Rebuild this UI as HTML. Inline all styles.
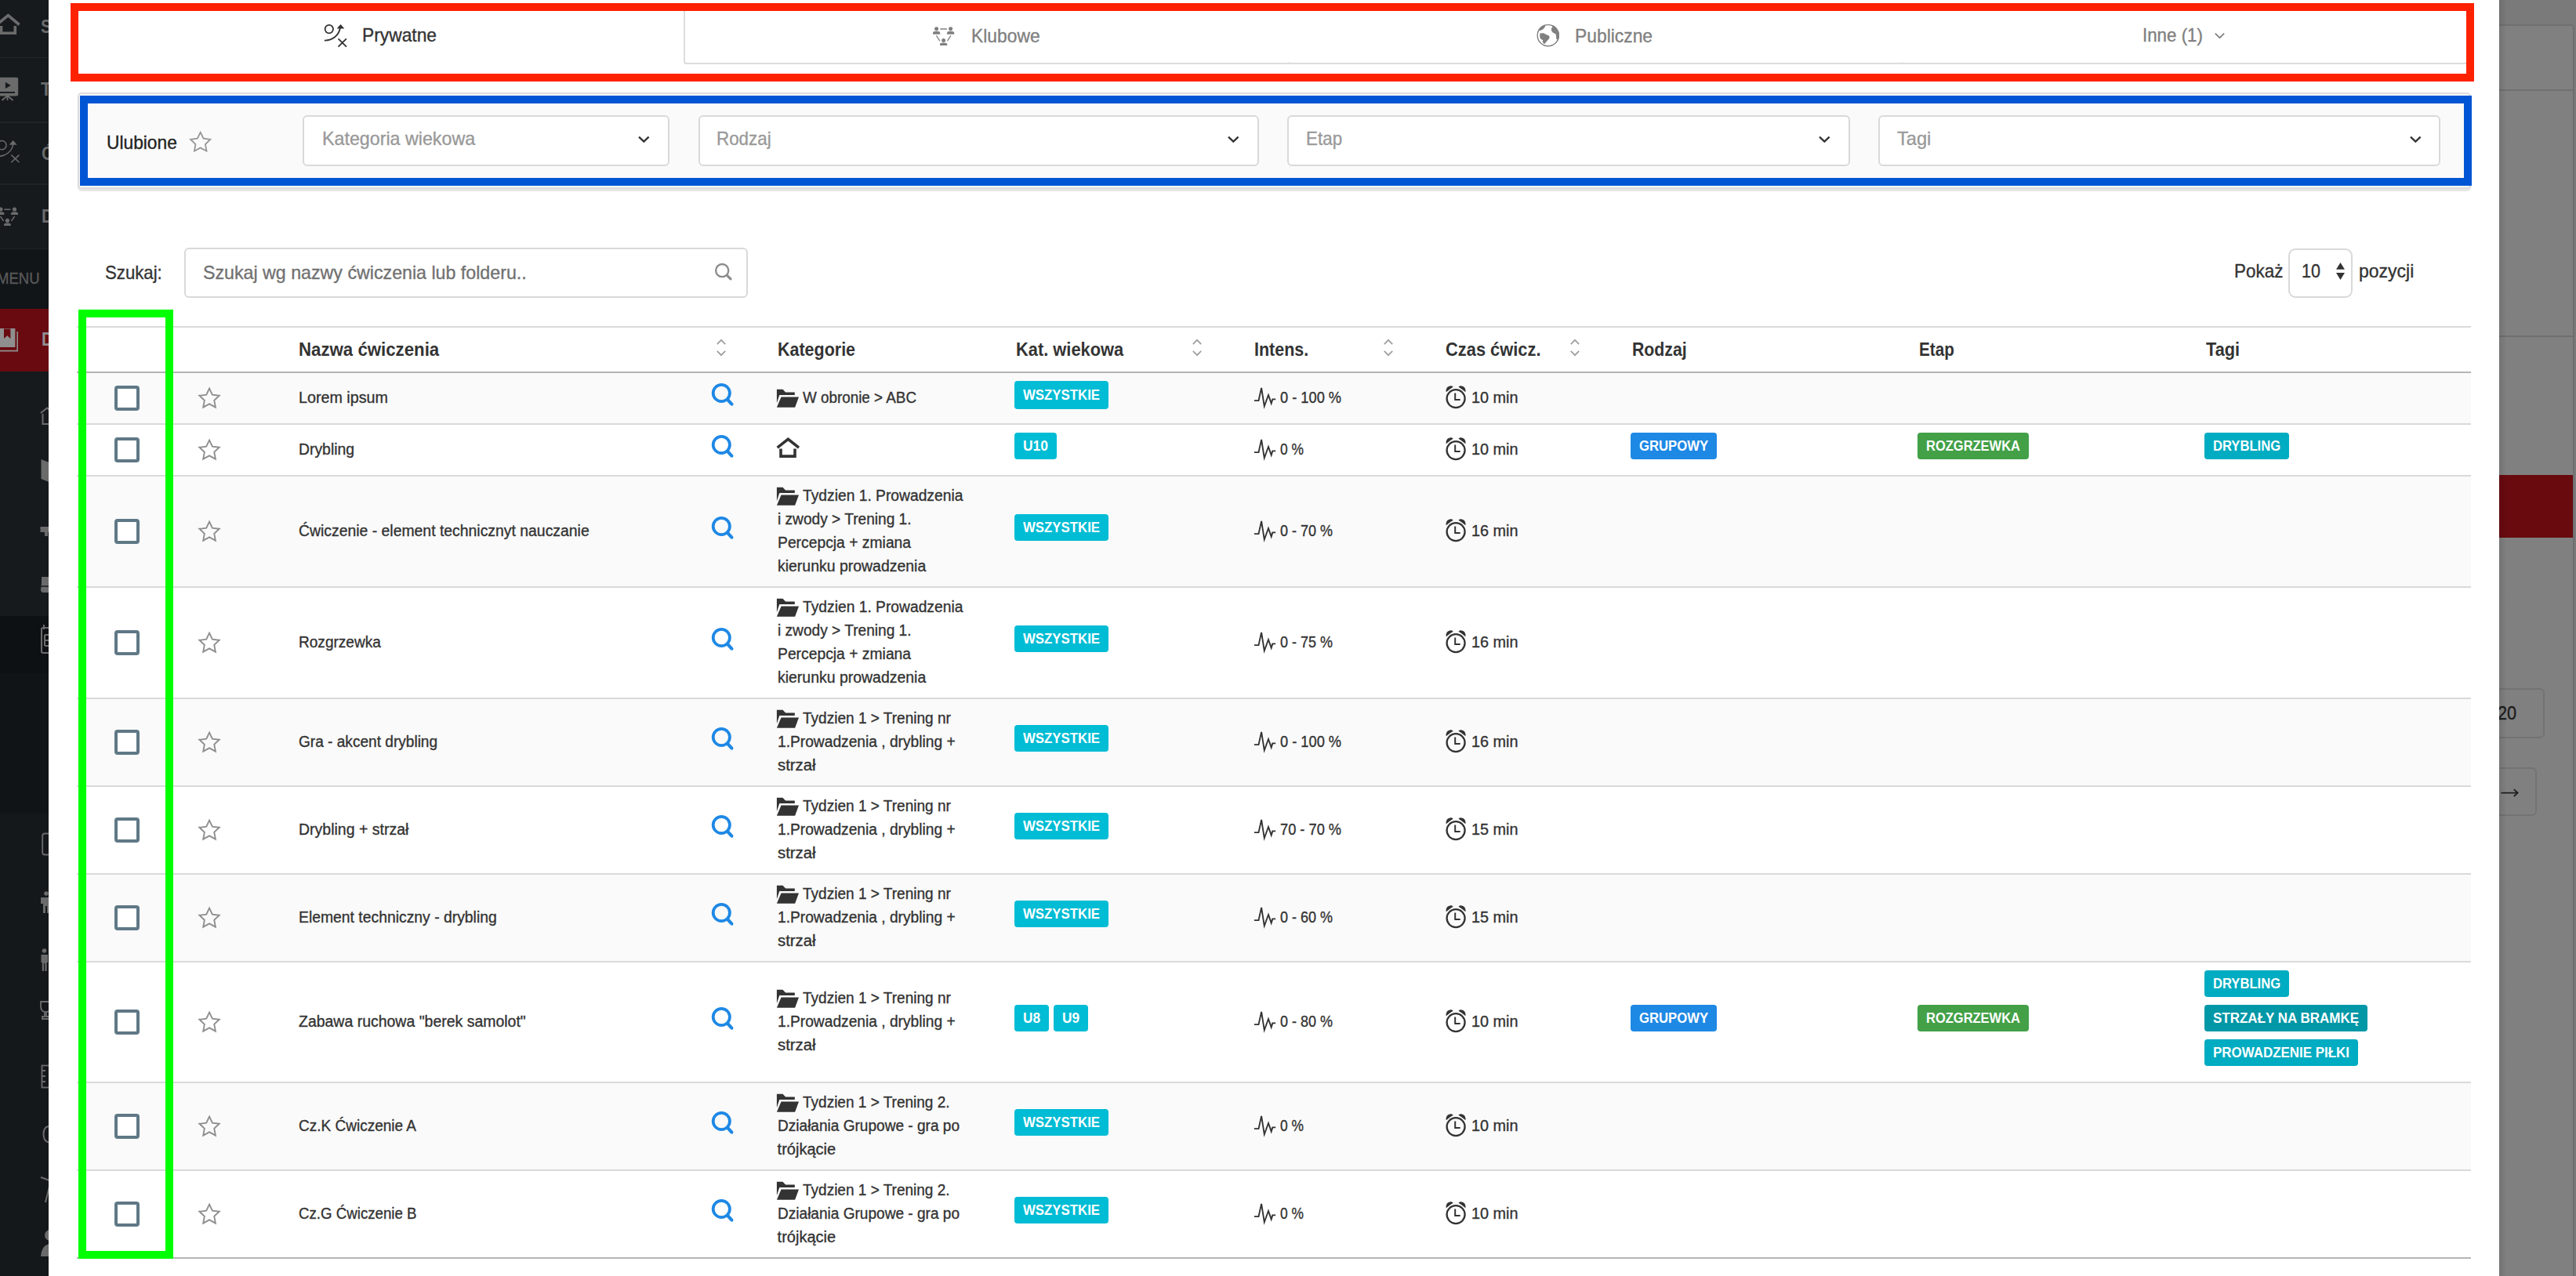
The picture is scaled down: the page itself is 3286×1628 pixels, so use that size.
<!DOCTYPE html>
<html><head><meta charset="utf-8"><title>Ćwiczenia</title>
<style>
html,body{margin:0;padding:0;}
body{width:3286px;height:1628px;position:relative;overflow:hidden;background:#fff;font-family:"Liberation Sans",sans-serif;}
.a{position:absolute;}
.t{position:absolute;white-space:nowrap;-webkit-text-stroke:0.35px currentColor;}
svg.a{overflow:visible;}
</style></head><body>
<div class="a" style="left:3188.00px;top:0.00px;width:98.00px;height:1628.00px;background:#7a7a7a;"></div>
<div class="a" style="left:3150.00px;top:31.00px;width:134.00px;height:1669.00px;box-sizing:border-box;background:#808080;border:2px solid #6f6f6f;border-radius:5px;"></div>
<div class="a" style="left:3188.00px;top:113.50px;width:95.00px;height:2.00px;background:#6f6f6f;"></div>
<div class="a" style="left:3188.00px;top:427.50px;width:95.00px;height:2.00px;background:#6f6f6f;"></div>
<div class="a" style="left:3188.00px;top:606.00px;width:94.00px;height:80.00px;background:#690a0f;"></div>
<div class="a" style="left:3150.00px;top:878.00px;width:96.00px;height:64.00px;box-sizing:border-box;border:2px solid #737373;border-radius:6px;"></div>
<div class="t" style="left:3186.20px;top:897.68px;font-size:24px;line-height:24px;color:#1b1b1b;transform:scaleX(0.9047);transform-origin:0 0;">20</div>
<div class="a" style="left:3150.00px;top:978.50px;width:86.00px;height:62.50px;box-sizing:border-box;border:2px solid #737373;border-radius:6px;"></div>
<svg class="a" style="left:3185.00px;top:1000.00px;" width="34.00" height="24.00" viewBox="3185.00 1000.00 34.00 24.00"><path d="M3190.5 1011.6 H3211.5" stroke="#1b1b1b" stroke-width="1.7"/><path d="M3206.8 1007.2 L3211.6 1011.6 L3206.8 1016" fill="none" stroke="#1b1b1b" stroke-width="1.7"/></svg>
<div class="a" style="left:3188.00px;top:0.00px;width:10.00px;height:1628.00px;background:linear-gradient(to right, rgba(0,0,0,0.10), rgba(0,0,0,0));"></div>
<div class="a" style="left:62.00px;top:0.00px;width:3126.00px;height:1628.00px;background:#ffffff;"></div>
<div class="a" style="left:0;top:0;width:62px;height:1628px;overflow:hidden;background:#161a1d;">
<div class="a" style="left:0.00px;top:317.00px;width:62.00px;height:77.00px;background:#111518;"></div>
<div class="a" style="left:0.00px;top:786.00px;width:62.00px;height:73.00px;background:#0d1113;"></div>
<div class="a" style="left:0.00px;top:859.00px;width:62.00px;height:179.00px;background:#101416;"></div>
<div class="a" style="left:0.00px;top:1038.00px;width:62.00px;height:590.00px;background:#14181b;"></div>
<div class="a" style="left:0.00px;top:72.50px;width:62.00px;height:1.50px;background:#1f2427;"></div>
<div class="a" style="left:0.00px;top:155.00px;width:62.00px;height:1.50px;background:#1f2427;"></div>
<div class="a" style="left:0.00px;top:234.00px;width:62.00px;height:1.50px;background:#1f2427;"></div>
<div class="a" style="left:0.00px;top:316.50px;width:62.00px;height:1.50px;background:#1f2427;"></div>
<div class="a" style="left:0.00px;top:394.00px;width:62.00px;height:80.00px;background:#690a10;"></div>
<svg class="a" style="left:0.00px;top:14.00px;" width="30.00" height="34.00" viewBox="0.00 14.00 30.00 34.00"><path d="M-4 31.5 L10.4 19.6 L24.6 31.5" fill="none" stroke="#6b6b6b" stroke-width="3.6"/><path d="M1.5 33 V42.2 H19.3 V33" fill="none" stroke="#6b6b6b" stroke-width="3.6"/></svg>
<div class="t" style="left:52.30px;top:22.28px;font-size:24px;line-height:24px;color:#6b6b6b;font-weight:bold;-webkit-text-stroke:0;transform:scaleX(0.8682);transform-origin:0 0;">S</div>
<svg class="a" style="left:0.00px;top:96.00px;" width="30.00" height="34.00" viewBox="0.00 96.00 30.00 34.00"><rect x="-6" y="98.8" width="29.2" height="23.8" rx="2" fill="#6b6b6b"/><path d="M6.9 104.8 L13.8 108.9 L6.9 112.9 Z" fill="#161a1d"/><rect x="-2" y="117" width="21" height="1.9" fill="#161a1d"/><path d="M9.5 122 V128 M9.5 122 L2.5 128 M9.5 122 L16.5 128" stroke="#6b6b6b" stroke-width="1.8"/></svg>
<div class="t" style="left:52.20px;top:101.58px;font-size:24px;line-height:24px;color:#6b6b6b;font-weight:bold;-webkit-text-stroke:0;transform:scaleX(0.9418);transform-origin:0 0;">T</div>
<svg class="a" style="left:0.00px;top:170.00px;" width="30.00" height="42.00" viewBox="0.00 170.00 30.00 42.00"><g fill="none" stroke="#6b6b6b" stroke-width="1.5"><circle cx="2.4" cy="185.2" r="5.6"/><path d="M-3 199.6 C7 199.4 15.6 193.5 16.8 183.5"/><path d="M14.3 197.6 L24.5 207.3 M24.5 197.6 L14.3 207.3"/></g><path d="M16.7 179 L21.6 184.7 L11.7 184.7 Z" fill="#6b6b6b"/></svg>
<div class="t" style="left:52.70px;top:183.88px;font-size:24px;line-height:24px;color:#6b6b6b;font-weight:bold;-webkit-text-stroke:0;transform:scaleX(0.8747);transform-origin:0 0;">Ć</div>
<svg class="a" style="left:-6.00px;top:260.00px;" width="36.00" height="32.00" viewBox="-6.00 260.00 36.00 32.00"><g fill="#6b6b6b"><circle cx="1" cy="267" r="2.6"/><circle cx="18.5" cy="267" r="2.6"/><circle cx="9.4" cy="281.4" r="2.6"/><path d="M-4 274 V272.6 Q-4 270.2 1 270.2 Q5.4 270.2 5.4 272.6 V274 Z"/><path d="M14 274 V272.6 Q14 270.2 18.5 270.2 Q23 270.2 23 272.6 V274 Z"/><path d="M5 288 V286.6 Q5 284.6 9.4 284.6 Q13.8 284.6 13.8 286.6 V288 Z"/></g><path d="M5.4 267.3 H13.4 M0.5 276 L4.5 282 M18.6 276 L14.5 282" stroke="#6b6b6b" stroke-width="1.4"/></svg>
<div class="t" style="left:53.00px;top:263.58px;font-size:24px;line-height:24px;color:#6b6b6b;font-weight:bold;-webkit-text-stroke:0;transform:scaleX(0.8747);transform-origin:0 0;">D</div>
<div class="t" style="left:-4.40px;top:345.07px;font-size:20px;line-height:20px;color:#5a5a5a;transform:scaleX(0.9254);transform-origin:0 0;">MENU</div>
<svg class="a" style="left:-4.00px;top:414.00px;" width="30.00" height="38.00" viewBox="-4.00 414.00 30.00 38.00"><path d="M-2 419 H19.4 V443 H-2 Z" fill="#8f8f8f"/><path d="M5 419.5 V432 L9.2 428.3 L13.4 432 V419.5 Z" fill="#690a10"/><path d="M22.2 423 V447.6 H-1" fill="none" stroke="#8f8f8f" stroke-width="1.6"/><path d="M1.5 444.8 H19" stroke="#690a10" stroke-width="1"/></svg>
<div class="t" style="left:52.70px;top:421.38px;font-size:24px;line-height:24px;color:#8f8f8f;font-weight:bold;-webkit-text-stroke:0;transform:scaleX(0.8747);transform-origin:0 0;">D</div>
<svg class="a" style="left:48.00px;top:515.00px;" width="16.00" height="30.00" viewBox="48.00 515.00 16.00 30.00"><path d="M52 527 L60 520.5 L68 527" fill="none" stroke="#6b6b6b" stroke-width="2"/><path d="M54.5 528 V541 H66" fill="none" stroke="#6b6b6b" stroke-width="2"/></svg>
<svg class="a" style="left:48.00px;top:580.00px;" width="16.00" height="40.00" viewBox="48.00 580.00 16.00 40.00"><path d="M52.5 586 L62.5 590 V615 L52.5 611 Z" fill="#6b6b6b"/></svg>
<svg class="a" style="left:48.00px;top:665.00px;" width="16.00" height="24.00" viewBox="48.00 665.00 16.00 24.00"><rect x="51.5" y="672" width="11" height="7" fill="#6b6b6b"/><rect x="57" y="678" width="4" height="6" fill="#6b6b6b"/></svg>
<svg class="a" style="left:48.00px;top:732.00px;" width="16.00" height="28.00" viewBox="48.00 732.00 16.00 28.00"><path d="M53 736 H63 V756 H55 Q52 756 52 752 L53 744 Z" fill="#6b6b6b"/><path d="M52 748 H63" stroke="#161a1d" stroke-width="1.5"/></svg>
<svg class="a" style="left:48.00px;top:794.00px;" width="16.00" height="44.00" viewBox="48.00 794.00 16.00 44.00"><rect x="53" y="801" width="12" height="32" rx="2" fill="none" stroke="#6b6b6b" stroke-width="2"/><path d="M56 797 V803" stroke="#6b6b6b" stroke-width="2"/><path d="M57 810 H63 M57 817 H63 M57 824 H63 M57 810 V824" stroke="#6b6b6b" stroke-width="2"/></svg>
<svg class="a" style="left:48.00px;top:1058.00px;" width="16.00" height="38.00" viewBox="48.00 1058.00 16.00 38.00"><rect x="54.2" y="1063.5" width="12" height="27" rx="3" fill="none" stroke="#6b6b6b" stroke-width="1.8"/></svg>
<svg class="a" style="left:48.00px;top:1132.00px;" width="16.00" height="36.00" viewBox="48.00 1132.00 16.00 36.00"><circle cx="59" cy="1140" r="2.8" fill="#6b6b6b"/><path d="M52 1145 H66 V1153 H63 V1165 H60 V1156 H58 V1165 H55 V1153 H52 Z" fill="#6b6b6b"/></svg>
<svg class="a" style="left:48.00px;top:1205.00px;" width="16.00" height="38.00" viewBox="48.00 1205.00 16.00 38.00"><circle cx="56.5" cy="1213" r="2.8" fill="#6b6b6b"/><path d="M52.5 1218 H61 V1228 H59.6 V1239 H57.3 V1229 H56 V1239 H53.8 V1228 H52.5 Z" fill="#6b6b6b"/></svg>
<svg class="a" style="left:48.00px;top:1272.00px;" width="16.00" height="34.00" viewBox="48.00 1272.00 16.00 34.00"><path d="M52 1278 H66 V1284 Q66 1290 59 1291 V1297 H63 V1300 H54 V1297 H57 V1291 Q52 1290 52 1284 Z" fill="none" stroke="#6b6b6b" stroke-width="1.8"/></svg>
<svg class="a" style="left:48.00px;top:1354.00px;" width="16.00" height="40.00" viewBox="48.00 1354.00 16.00 40.00"><rect x="53.5" y="1359.5" width="10" height="28" fill="none" stroke="#6b6b6b" stroke-width="1.8"/><path d="M54 1366 H58 M54 1373 H58 M54 1380 H58" stroke="#6b6b6b" stroke-width="1.8"/></svg>
<svg class="a" style="left:48.00px;top:1430.00px;" width="16.00" height="34.00" viewBox="48.00 1430.00 16.00 34.00"><path d="M62 1437 Q55.5 1438 55.5 1447 Q55.5 1456 62 1457.5" fill="none" stroke="#6b6b6b" stroke-width="2"/></svg>
<svg class="a" style="left:48.00px;top:1496.00px;" width="16.00" height="42.00" viewBox="48.00 1496.00 16.00 42.00"><path d="M52 1502 L63 1506 M63 1514 L58 1534" stroke="#6b6b6b" stroke-width="2"/></svg>
<svg class="a" style="left:48.00px;top:1562.00px;" width="16.00" height="44.00" viewBox="48.00 1562.00 16.00 44.00"><circle cx="64" cy="1576" r="7" fill="#6b6b6b"/><path d="M52 1603 Q53 1588 64 1587 V1603 Z" fill="#6b6b6b"/></svg>
</div>
<div class="a" style="left:873.00px;top:80.00px;width:2273.00px;height:2.00px;background:#dddddd;"></div>
<div class="a" style="left:872.00px;top:14.00px;width:774.00px;height:68.00px;box-sizing:border-box;border-left:2px solid #dddddd;border-bottom:2px solid #dddddd;border-bottom-left-radius:4px;border-bottom-right-radius:4px;"></div>
<div class="a" style="left:1644.00px;top:14.00px;width:783.00px;height:68.00px;box-sizing:border-box;border-bottom:2px solid #dddddd;border-radius:0 0 4px 4px;"></div>
<div class="a" style="left:2425.00px;top:14.00px;width:721.00px;height:68.00px;box-sizing:border-box;border-bottom:2px solid #dddddd;border-radius:0 0 4px 0;"></div>
<svg class="a" style="left:410.00px;top:28.00px;" width="36.00" height="36.00" viewBox="410.00 28.00 36.00 36.00"><g fill="none" stroke="#333333" stroke-width="1.80" stroke-linecap="round"><circle cx="419.8" cy="37.1" r="5.2"/><path d="M414.6 51.6 C424.5 51.2 432.5 45 433.9 35.5"/><path d="M432 49.9 L441.4 59.2 M441.4 49.9 L432 59.2"/></g><path d="M434.5 31 L439.3 36.6 L429.6 36.6 Z" fill="#333333"/></svg>
<div class="t" style="left:462.00px;top:33.48px;font-size:24px;line-height:24px;color:#333333;transform:scaleX(0.9500);transform-origin:0 0;">Prywatne</div>
<svg class="a" style="left:1186.00px;top:30.00px;" width="36.00" height="32.00" viewBox="1186.00 30.00 36.00 32.00"><g fill="#808080"><circle cx="1194.6" cy="36.8" r="2.5"/><circle cx="1212.6" cy="36.8" r="2.5"/><circle cx="1203.6" cy="51.4" r="2.5"/><path d="M1190 43.8 V42.2 Q1190 39.8 1194.6 39.8 Q1199.2 39.8 1199.2 42.2 V43.8 Z"/><path d="M1208 43.8 V42.2 Q1208 39.8 1212.6 39.8 Q1217.2 39.8 1217.2 42.2 V43.8 Z"/><path d="M1199 58 V56.4 Q1199 54.6 1203.6 54.6 Q1208.2 54.6 1208.2 56.4 V58 Z"/></g><g stroke="#808080" stroke-width="1.3" stroke-linecap="round"><path d="M1199.8 37 H1207.4 M1194.8 45.8 L1198.6 51.8 M1212.6 45.8 L1208.8 51.8"/></g></svg>
<div class="t" style="left:1239.00px;top:33.53px;font-size:24px;line-height:24px;color:#808080;transform:scaleX(0.9522);transform-origin:0 0;">Klubowe</div>
<svg class="a" style="left:1958.00px;top:28.00px;" width="34.00" height="34.00" viewBox="1958.00 28.00 34.00 34.00"><clipPath id="gclip"><circle cx="1974.8" cy="45.2" r="14.2"/></clipPath><circle cx="1974.8" cy="45.2" r="13.6" fill="none" stroke="#808080" stroke-width="1.4"/><g fill="#808080" clip-path="url(#gclip)"><path d="M1958 40 L1962.4 38.8 Q1964 39.5 1966.5 38.2 Q1969.6 37 1971 34 L1971 28 L1958 28 Z"/><path d="M1964.3 42.4 L1968.9 42.2 Q1971.5 43.6 1973.2 44.4 Q1976.6 45 1976.6 47.4 Q1976.4 49.6 1975 50.6 L1970.3 56 Q1968.5 55.3 1968.2 54.8 L1967.9 51 Q1964.3 49.5 1964.3 47.6 Z"/><path d="M1980.3 28 L1980.3 34.2 Q1978.7 35.6 1978.8 38.5 Q1980 42 1984.4 43.2 Q1985.3 46 1985.2 49.6 L1987.6 51.6 L1992 52 L1992 28 Z"/></g></svg>
<div class="t" style="left:2009.00px;top:33.58px;font-size:24px;line-height:24px;color:#808080;transform:scaleX(0.9519);transform-origin:0 0;">Publiczne</div>
<div class="t" style="left:2733.00px;top:33.48px;font-size:24px;line-height:24px;color:#808080;transform:scaleX(0.9305);transform-origin:0 0;">Inne (1)</div>
<svg class="a" style="left:2820.00px;top:38.00px;" width="24.00" height="16.00" viewBox="2820.00 38.00 24.00 16.00"><path d="M2825.80 42.60 L2831.50 48.20 L2837.20 42.60" fill="none" stroke="#808080" stroke-width="1.70"/></svg>
<div class="a" style="left:98.50px;top:118.00px;width:3053.00px;height:122.50px;box-sizing:border-box;background:#fafafa;border:2px solid #dcdcdc;border-radius:5px;box-shadow:0 3px 1px rgba(0,0,0,0.10);"></div>
<div class="t" style="left:136.40px;top:169.68px;font-size:24px;line-height:24px;color:#222222;transform:scaleX(0.9478);transform-origin:0 0;">Ulubione</div>
<svg class="a" style="left:238.00px;top:164.00px;" width="36.00" height="34.00" viewBox="238.00 164.00 36.00 34.00"><polygon points="255.70,168.80 259.58,176.66 268.25,177.92 261.98,184.04 263.46,192.68 255.70,188.60 247.94,192.68 249.42,184.04 243.15,177.92 251.82,176.66" fill="none" stroke="#959595" stroke-width="1.80" stroke-linejoin="miter"/></svg>
<div class="a" style="left:386.00px;top:146.50px;width:467.50px;height:65.00px;box-sizing:border-box;background:#ffffff;border:2px solid #d9d9d9;border-radius:6px;"></div>
<div class="t" style="left:411.30px;top:165.38px;font-size:24px;line-height:24px;color:#999999;transform:scaleX(0.9687);transform-origin:0 0;">Kategoria wiekowa</div>
<svg class="a" style="left:809.70px;top:168.00px;" width="22.00" height="18.00" viewBox="809.70 168.00 22.00 18.00"><path d="M814.70 174.60 L821.00 180.60 L827.30 174.60" fill="none" stroke="#333333" stroke-width="2.30"/></svg>
<div class="a" style="left:890.50px;top:146.50px;width:715.00px;height:65.00px;box-sizing:border-box;background:#ffffff;border:2px solid #d9d9d9;border-radius:6px;"></div>
<div class="t" style="left:914.10px;top:165.38px;font-size:24px;line-height:24px;color:#999999;transform:scaleX(0.9324);transform-origin:0 0;">Rodzaj</div>
<svg class="a" style="left:1561.70px;top:168.00px;" width="22.00" height="18.00" viewBox="1561.70 168.00 22.00 18.00"><path d="M1566.70 174.60 L1573.00 180.60 L1579.30 174.60" fill="none" stroke="#333333" stroke-width="2.30"/></svg>
<div class="a" style="left:1642.00px;top:146.50px;width:717.60px;height:65.00px;box-sizing:border-box;background:#ffffff;border:2px solid #d9d9d9;border-radius:6px;"></div>
<div class="t" style="left:1665.60px;top:165.38px;font-size:24px;line-height:24px;color:#999999;transform:scaleX(0.9337);transform-origin:0 0;">Etap</div>
<svg class="a" style="left:2315.80px;top:168.00px;" width="22.00" height="18.00" viewBox="2315.80 168.00 22.00 18.00"><path d="M2320.80 174.60 L2327.10 180.60 L2333.40 174.60" fill="none" stroke="#333333" stroke-width="2.30"/></svg>
<div class="a" style="left:2396.30px;top:146.50px;width:717.20px;height:65.00px;box-sizing:border-box;background:#ffffff;border:2px solid #d9d9d9;border-radius:6px;"></div>
<div class="t" style="left:2419.90px;top:165.38px;font-size:24px;line-height:24px;color:#999999;transform:scaleX(0.9852);transform-origin:0 0;">Tagi</div>
<svg class="a" style="left:3069.70px;top:168.00px;" width="22.00" height="18.00" viewBox="3069.70 168.00 22.00 18.00"><path d="M3074.70 174.60 L3081.00 180.60 L3087.30 174.60" fill="none" stroke="#333333" stroke-width="2.30"/></svg>
<div class="t" style="left:134.30px;top:335.78px;font-size:24px;line-height:24px;color:#333333;transform:scaleX(0.9244);transform-origin:0 0;">Szukaj:</div>
<div class="a" style="left:234.50px;top:316.00px;width:719.50px;height:64.00px;box-sizing:border-box;background:#fff;border:2px solid #d9d9d9;border-radius:6px;"></div>
<div class="t" style="left:258.60px;top:335.78px;font-size:24px;line-height:24px;color:#717171;transform:scaleX(0.9668);transform-origin:0 0;">Szukaj wg nazwy ćwiczenia lub folderu..</div>
<svg class="a" style="left:905.00px;top:330.00px;" width="32.00" height="32.00" viewBox="905.00 330.00 32.00 32.00"><circle cx="921.20" cy="345.10" r="8.10" fill="none" stroke="#8c8c8c" stroke-width="2.30"/><path d="M927.39 351.29 L932.00 355.90" stroke="#8c8c8c" stroke-width="3.20" stroke-linecap="round"/></svg>
<div class="t" style="left:2850.00px;top:334.38px;font-size:24px;line-height:24px;color:#333333;transform:scaleX(0.9348);transform-origin:0 0;">Pokaż</div>
<div class="a" style="left:2918.60px;top:316.50px;width:82.80px;height:63.00px;box-sizing:border-box;background:#fff;border:2px solid #d9d9d9;border-radius:9px;"></div>
<div class="t" style="left:2936.00px;top:334.08px;font-size:24px;line-height:24px;color:#333333;transform:scaleX(0.8972);transform-origin:0 0;">10</div>
<svg class="a" style="left:2976.00px;top:332.00px;" width="18.00" height="28.00" viewBox="2976.00 332.00 18.00 28.00"><path d="M2985.5 335 L2991 343.8 L2980 343.8 Z M2980 348 L2991 348 L2985.5 357.1 Z" fill="#333"/></svg>
<div class="t" style="left:3008.70px;top:334.38px;font-size:24px;line-height:24px;color:#333333;transform:scaleX(0.9584);transform-origin:0 0;">pozycji</div>
<div class="a" style="left:98.00px;top:416.00px;width:3054.00px;height:2.00px;background:#dadada;"></div>
<div class="a" style="left:98.00px;top:474.00px;width:3054.00px;height:2.00px;background:#b5b5b5;"></div>
<div class="t" style="left:381.00px;top:433.58px;font-size:24px;line-height:24px;color:#333333;font-weight:bold;-webkit-text-stroke:0;transform:scaleX(0.9266);transform-origin:0 0;">Nazwa ćwiczenia</div>
<div class="t" style="left:992.00px;top:433.58px;font-size:24px;line-height:24px;color:#333333;font-weight:bold;-webkit-text-stroke:0;transform:scaleX(0.8948);transform-origin:0 0;">Kategorie</div>
<div class="t" style="left:1295.60px;top:433.58px;font-size:24px;line-height:24px;color:#333333;font-weight:bold;-webkit-text-stroke:0;transform:scaleX(0.9101);transform-origin:0 0;">Kat. wiekowa</div>
<div class="t" style="left:1599.60px;top:433.58px;font-size:24px;line-height:24px;color:#333333;font-weight:bold;-webkit-text-stroke:0;transform:scaleX(0.8945);transform-origin:0 0;">Intens.</div>
<div class="t" style="left:1843.70px;top:433.58px;font-size:24px;line-height:24px;color:#333333;font-weight:bold;-webkit-text-stroke:0;transform:scaleX(0.9109);transform-origin:0 0;">Czas ćwicz.</div>
<div class="t" style="left:2081.50px;top:433.58px;font-size:24px;line-height:24px;color:#333333;font-weight:bold;-webkit-text-stroke:0;transform:scaleX(0.8863);transform-origin:0 0;">Rodzaj</div>
<div class="t" style="left:2447.80px;top:433.58px;font-size:24px;line-height:24px;color:#333333;font-weight:bold;-webkit-text-stroke:0;transform:scaleX(0.8615);transform-origin:0 0;">Etap</div>
<div class="t" style="left:2813.50px;top:433.58px;font-size:24px;line-height:24px;color:#333333;font-weight:bold;-webkit-text-stroke:0;transform:scaleX(0.9074);transform-origin:0 0;">Tagi</div>
<svg class="a" style="left:911.60px;top:430.00px;" width="18.00" height="28.00" viewBox="911.60 430.00 18.00 28.00"><path d="M914.40 439.20 L919.60 433.80 L924.80 439.20" fill="none" stroke="#9e9e9e" stroke-width="1.70"/><path d="M914.40 447.80 L919.60 453.20 L924.80 447.80" fill="none" stroke="#9e9e9e" stroke-width="1.70"/></svg>
<svg class="a" style="left:1519.00px;top:430.00px;" width="18.00" height="28.00" viewBox="1519.00 430.00 18.00 28.00"><path d="M1521.80 439.20 L1527.00 433.80 L1532.20 439.20" fill="none" stroke="#9e9e9e" stroke-width="1.70"/><path d="M1521.80 447.80 L1527.00 453.20 L1532.20 447.80" fill="none" stroke="#9e9e9e" stroke-width="1.70"/></svg>
<svg class="a" style="left:1763.00px;top:430.00px;" width="18.00" height="28.00" viewBox="1763.00 430.00 18.00 28.00"><path d="M1765.80 439.20 L1771.00 433.80 L1776.20 439.20" fill="none" stroke="#9e9e9e" stroke-width="1.70"/><path d="M1765.80 447.80 L1771.00 453.20 L1776.20 447.80" fill="none" stroke="#9e9e9e" stroke-width="1.70"/></svg>
<svg class="a" style="left:2000.80px;top:430.00px;" width="18.00" height="28.00" viewBox="2000.80 430.00 18.00 28.00"><path d="M2003.60 439.20 L2008.80 433.80 L2014.00 439.20" fill="none" stroke="#9e9e9e" stroke-width="1.70"/><path d="M2003.60 447.80 L2008.80 453.20 L2014.00 447.80" fill="none" stroke="#9e9e9e" stroke-width="1.70"/></svg>
<div class="a" style="left:98.00px;top:476.00px;width:3054.00px;height:64.00px;background:#fafafa;"></div>
<div class="a" style="left:98.00px;top:540.00px;width:3054.00px;height:2.00px;background:#dadada;"></div>
<div class="a" style="left:146.00px;top:492.00px;width:32.00px;height:32.00px;box-sizing:border-box;background:#fff;border:4px solid #5f7886;border-radius:4px;"></div>
<svg class="a" style="left:250.00px;top:491.00px;" width="34.00" height="34.00" viewBox="250.00 491.00 34.00 34.00"><polygon points="267.05,495.60 270.88,503.63 279.70,504.79 273.25,510.91 274.87,519.66 267.05,515.42 259.23,519.66 260.85,510.91 254.40,504.79 263.22,503.63" fill="none" stroke="#8e8e8e" stroke-width="1.90" stroke-linejoin="miter"/></svg>
<div class="t" style="left:381.00px;top:497.07px;font-size:20px;line-height:20px;color:#333333;transform:scaleX(0.9856);transform-origin:0 0;">Lorem ipsum</div>
<svg class="a" style="left:900.00px;top:484.00px;" width="42.00" height="40.00" viewBox="900.00 484.00 42.00 40.00"><circle cx="920.30" cy="501.50" r="10.60" fill="none" stroke="#1e88e5" stroke-width="3.80"/><path d="M928.47 510.29 L933.40 515.60" stroke="#1e88e5" stroke-width="4.20" stroke-linecap="round"/></svg>
<svg class="a" style="left:988.00px;top:492.00px;" width="34.00" height="30.00" viewBox="988.00 492.00 34.00 30.00"><g fill="#333" transform="translate(990.90 496.80)"><path d="M0 0 H7.6 L11.2 3.8 H22.9 V7.1 H3.4 L0 17.5 Z"/><path d="M5.6 9.6 H28.1 L23.2 23 H0 Z"/></g></svg>
<div class="t" style="left:1024.40px;top:497.07px;font-size:20px;line-height:20px;color:#333333;transform:scaleX(0.9418);transform-origin:0 0;">W obronie &gt; ABC</div>
<div class="a" style="left:1294.00px;top:486.00px;width:120.00px;height:36.00px;box-sizing:border-box;background:#00bcd4;border-radius:4px;"></div>
<div class="t" style="left:1305.00px;top:495.36px;font-size:18px;line-height:18px;color:#ffffff;font-weight:bold;-webkit-text-stroke:0;transform:scaleX(0.9333);transform-origin:0 0;">WSZYSTKIE</div>
<svg class="a" style="left:1594.00px;top:489.00px;" width="38.00" height="34.00" viewBox="1594.00 489.00 38.00 34.00"><path d="M1599.90 511.10 L1605.50 511.10 L1609.10 494.90 L1612.80 518.30 L1618.00 504.00 L1621.70 514.60 L1623.30 509.40 L1627.20 509.40" fill="none" stroke="#333" stroke-width="1.9" stroke-linejoin="miter"/></svg>
<div class="t" style="left:1633.00px;top:497.07px;font-size:20px;line-height:20px;color:#333333;transform:scaleX(0.9123);transform-origin:0 0;">0 - 100 %</div>
<svg class="a" style="left:1840.00px;top:488.00px;" width="36.00" height="38.00" viewBox="1840.00 488.00 36.00 38.00"><circle cx="1857.10" cy="508.60" r="11.5" fill="none" stroke="#333" stroke-width="2.3"/><path d="M1856.20 501.60 V509.90 H1862.70" fill="none" stroke="#333" stroke-width="2"/><path d="M1869.40 500.20 C1870.50 495.40 1866.70 491.60 1862.50 492.20 L1860.40 493.80 Q1864.50 496.00 1869.40 500.20 Z" fill="#333"/><path d="M1844.80 500.20 C1843.70 495.40 1847.50 491.60 1851.70 492.20 L1853.80 493.80 Q1849.70 496.00 1844.80 500.20 Z" fill="#333"/></svg>
<div class="t" style="left:1877.30px;top:497.07px;font-size:20px;line-height:20px;color:#333333;transform:scaleX(0.9913);transform-origin:0 0;">10 min</div>
<div class="a" style="left:98.00px;top:606.00px;width:3054.00px;height:2.00px;background:#dadada;"></div>
<div class="a" style="left:146.00px;top:558.00px;width:32.00px;height:32.00px;box-sizing:border-box;background:#fff;border:4px solid #5f7886;border-radius:4px;"></div>
<svg class="a" style="left:250.00px;top:557.00px;" width="34.00" height="34.00" viewBox="250.00 557.00 34.00 34.00"><polygon points="267.05,561.60 270.88,569.63 279.70,570.79 273.25,576.91 274.87,585.66 267.05,581.42 259.23,585.66 260.85,576.91 254.40,570.79 263.22,569.63" fill="none" stroke="#8e8e8e" stroke-width="1.90" stroke-linejoin="miter"/></svg>
<div class="t" style="left:381.00px;top:563.07px;font-size:20px;line-height:20px;color:#333333;transform:scaleX(0.9683);transform-origin:0 0;">Drybling</div>
<svg class="a" style="left:900.00px;top:550.00px;" width="42.00" height="40.00" viewBox="900.00 550.00 42.00 40.00"><circle cx="920.30" cy="567.50" r="10.60" fill="none" stroke="#1e88e5" stroke-width="3.80"/><path d="M928.47 576.29 L933.40 581.60" stroke="#1e88e5" stroke-width="4.20" stroke-linecap="round"/></svg>
<svg class="a" style="left:986.00px;top:554.00px;" width="38.00" height="34.00" viewBox="986.00 554.00 38.00 34.00"><g fill="none" stroke="#333" stroke-width="3.50" stroke-linejoin="miter" transform="translate(990.40 557.90)"><path d="M1.2 13.2 L14.9 2.4 L28.6 13.2"/><path d="M5.6 14.6 V24.2 H23.6 V14.6" stroke-width="3.6"/></g></svg>
<div class="a" style="left:1294.00px;top:552.00px;width:54.00px;height:34.00px;box-sizing:border-box;background:#00bcd4;border-radius:4px;"></div>
<div class="t" style="left:1305.00px;top:560.36px;font-size:18px;line-height:18px;color:#ffffff;font-weight:bold;-webkit-text-stroke:0;transform:scaleX(0.9697);transform-origin:0 0;">U10</div>
<svg class="a" style="left:1594.00px;top:555.00px;" width="38.00" height="34.00" viewBox="1594.00 555.00 38.00 34.00"><path d="M1599.90 577.10 L1605.50 577.10 L1609.10 560.90 L1612.80 584.30 L1618.00 570.00 L1621.70 580.60 L1623.30 575.40 L1627.20 575.40" fill="none" stroke="#333" stroke-width="1.9" stroke-linejoin="miter"/></svg>
<div class="t" style="left:1633.00px;top:563.07px;font-size:20px;line-height:20px;color:#333333;transform:scaleX(0.8690);transform-origin:0 0;">0 %</div>
<svg class="a" style="left:1840.00px;top:554.00px;" width="36.00" height="38.00" viewBox="1840.00 554.00 36.00 38.00"><circle cx="1857.10" cy="574.60" r="11.5" fill="none" stroke="#333" stroke-width="2.3"/><path d="M1856.20 567.60 V575.90 H1862.70" fill="none" stroke="#333" stroke-width="2"/><path d="M1869.40 566.20 C1870.50 561.40 1866.70 557.60 1862.50 558.20 L1860.40 559.80 Q1864.50 562.00 1869.40 566.20 Z" fill="#333"/><path d="M1844.80 566.20 C1843.70 561.40 1847.50 557.60 1851.70 558.20 L1853.80 559.80 Q1849.70 562.00 1844.80 566.20 Z" fill="#333"/></svg>
<div class="t" style="left:1877.30px;top:563.07px;font-size:20px;line-height:20px;color:#333333;transform:scaleX(0.9913);transform-origin:0 0;">10 min</div>
<div class="a" style="left:2080.00px;top:552.00px;width:110.00px;height:34.00px;box-sizing:border-box;background:#1e88e5;border-radius:4px;"></div>
<div class="t" style="left:2091.00px;top:560.36px;font-size:18px;line-height:18px;color:#ffffff;font-weight:bold;-webkit-text-stroke:0;transform:scaleX(0.9263);transform-origin:0 0;">GRUPOWY</div>
<div class="a" style="left:2446.00px;top:552.00px;width:142.00px;height:34.00px;box-sizing:border-box;background:#43a047;border-radius:4px;"></div>
<div class="t" style="left:2457.00px;top:560.36px;font-size:18px;line-height:18px;color:#ffffff;font-weight:bold;-webkit-text-stroke:0;transform:scaleX(0.9160);transform-origin:0 0;">ROZGRZEWKA</div>
<div class="a" style="left:2812.00px;top:552.00px;width:108.00px;height:34.00px;box-sizing:border-box;background:#00acc1;border-radius:4px;"></div>
<div class="t" style="left:2823.00px;top:560.36px;font-size:18px;line-height:18px;color:#ffffff;font-weight:bold;-webkit-text-stroke:0;transform:scaleX(0.9223);transform-origin:0 0;">DRYBLING</div>
<div class="a" style="left:98.00px;top:608.00px;width:3054.00px;height:140.00px;background:#fafafa;"></div>
<div class="a" style="left:98.00px;top:748.00px;width:3054.00px;height:2.00px;background:#dadada;"></div>
<div class="a" style="left:146.00px;top:662.00px;width:32.00px;height:32.00px;box-sizing:border-box;background:#fff;border:4px solid #5f7886;border-radius:4px;"></div>
<svg class="a" style="left:250.00px;top:661.00px;" width="34.00" height="34.00" viewBox="250.00 661.00 34.00 34.00"><polygon points="267.05,665.60 270.88,673.63 279.70,674.79 273.25,680.91 274.87,689.66 267.05,685.42 259.23,689.66 260.85,680.91 254.40,674.79 263.22,673.63" fill="none" stroke="#8e8e8e" stroke-width="1.90" stroke-linejoin="miter"/></svg>
<div class="t" style="left:381.00px;top:667.07px;font-size:20px;line-height:20px;color:#333333;transform:scaleX(0.9693);transform-origin:0 0;">Ćwiczenie - element technicznyt nauczanie</div>
<svg class="a" style="left:900.00px;top:654.00px;" width="42.00" height="40.00" viewBox="900.00 654.00 42.00 40.00"><circle cx="920.30" cy="671.50" r="10.60" fill="none" stroke="#1e88e5" stroke-width="3.80"/><path d="M928.47 680.29 L933.40 685.60" stroke="#1e88e5" stroke-width="4.20" stroke-linecap="round"/></svg>
<svg class="a" style="left:988.00px;top:617.00px;" width="34.00" height="30.00" viewBox="988.00 617.00 34.00 30.00"><g fill="#333" transform="translate(990.90 621.80)"><path d="M0 0 H7.6 L11.2 3.8 H22.9 V7.1 H3.4 L0 17.5 Z"/><path d="M5.6 9.6 H28.1 L23.2 23 H0 Z"/></g></svg>
<div class="t" style="left:1024.40px;top:622.07px;font-size:20px;line-height:20px;color:#333333;transform:scaleX(0.9624);transform-origin:0 0;">Tydzien 1. Prowadzenia</div>
<div class="t" style="left:991.60px;top:651.97px;font-size:20px;line-height:20px;color:#333333;transform:scaleX(0.9559);transform-origin:0 0;">i zwody &gt; Trening 1.</div>
<div class="t" style="left:991.60px;top:681.87px;font-size:20px;line-height:20px;color:#333333;transform:scaleX(0.9653);transform-origin:0 0;">Percepcja + zmiana</div>
<div class="t" style="left:991.60px;top:711.77px;font-size:20px;line-height:20px;color:#333333;transform:scaleX(0.9725);transform-origin:0 0;">kierunku prowadzenia</div>
<div class="a" style="left:1294.00px;top:656.00px;width:120.00px;height:34.00px;box-sizing:border-box;background:#00bcd4;border-radius:4px;"></div>
<div class="t" style="left:1305.00px;top:664.36px;font-size:18px;line-height:18px;color:#ffffff;font-weight:bold;-webkit-text-stroke:0;transform:scaleX(0.9333);transform-origin:0 0;">WSZYSTKIE</div>
<svg class="a" style="left:1594.00px;top:659.00px;" width="38.00" height="34.00" viewBox="1594.00 659.00 38.00 34.00"><path d="M1599.90 681.10 L1605.50 681.10 L1609.10 664.90 L1612.80 688.30 L1618.00 674.00 L1621.70 684.60 L1623.30 679.40 L1627.20 679.40" fill="none" stroke="#333" stroke-width="1.9" stroke-linejoin="miter"/></svg>
<div class="t" style="left:1633.00px;top:667.07px;font-size:20px;line-height:20px;color:#333333;transform:scaleX(0.8997);transform-origin:0 0;">0 - 70 %</div>
<svg class="a" style="left:1840.00px;top:658.00px;" width="36.00" height="38.00" viewBox="1840.00 658.00 36.00 38.00"><circle cx="1857.10" cy="678.60" r="11.5" fill="none" stroke="#333" stroke-width="2.3"/><path d="M1856.20 671.60 V679.90 H1862.70" fill="none" stroke="#333" stroke-width="2"/><path d="M1869.40 670.20 C1870.50 665.40 1866.70 661.60 1862.50 662.20 L1860.40 663.80 Q1864.50 666.00 1869.40 670.20 Z" fill="#333"/><path d="M1844.80 670.20 C1843.70 665.40 1847.50 661.60 1851.70 662.20 L1853.80 663.80 Q1849.70 666.00 1844.80 670.20 Z" fill="#333"/></svg>
<div class="t" style="left:1877.30px;top:667.07px;font-size:20px;line-height:20px;color:#333333;transform:scaleX(0.9913);transform-origin:0 0;">16 min</div>
<div class="a" style="left:98.00px;top:890.00px;width:3054.00px;height:2.00px;background:#dadada;"></div>
<div class="a" style="left:146.00px;top:804.00px;width:32.00px;height:32.00px;box-sizing:border-box;background:#fff;border:4px solid #5f7886;border-radius:4px;"></div>
<svg class="a" style="left:250.00px;top:803.00px;" width="34.00" height="34.00" viewBox="250.00 803.00 34.00 34.00"><polygon points="267.05,807.60 270.88,815.63 279.70,816.79 273.25,822.91 274.87,831.66 267.05,827.42 259.23,831.66 260.85,822.91 254.40,816.79 263.22,815.63" fill="none" stroke="#8e8e8e" stroke-width="1.90" stroke-linejoin="miter"/></svg>
<div class="t" style="left:381.00px;top:809.07px;font-size:20px;line-height:20px;color:#333333;transform:scaleX(0.9529);transform-origin:0 0;">Rozgrzewka</div>
<svg class="a" style="left:900.00px;top:796.00px;" width="42.00" height="40.00" viewBox="900.00 796.00 42.00 40.00"><circle cx="920.30" cy="813.50" r="10.60" fill="none" stroke="#1e88e5" stroke-width="3.80"/><path d="M928.47 822.29 L933.40 827.60" stroke="#1e88e5" stroke-width="4.20" stroke-linecap="round"/></svg>
<svg class="a" style="left:988.00px;top:759.00px;" width="34.00" height="30.00" viewBox="988.00 759.00 34.00 30.00"><g fill="#333" transform="translate(990.90 763.80)"><path d="M0 0 H7.6 L11.2 3.8 H22.9 V7.1 H3.4 L0 17.5 Z"/><path d="M5.6 9.6 H28.1 L23.2 23 H0 Z"/></g></svg>
<div class="t" style="left:1024.40px;top:764.07px;font-size:20px;line-height:20px;color:#333333;transform:scaleX(0.9624);transform-origin:0 0;">Tydzien 1. Prowadzenia</div>
<div class="t" style="left:991.60px;top:793.97px;font-size:20px;line-height:20px;color:#333333;transform:scaleX(0.9559);transform-origin:0 0;">i zwody &gt; Trening 1.</div>
<div class="t" style="left:991.60px;top:823.87px;font-size:20px;line-height:20px;color:#333333;transform:scaleX(0.9653);transform-origin:0 0;">Percepcja + zmiana</div>
<div class="t" style="left:991.60px;top:853.77px;font-size:20px;line-height:20px;color:#333333;transform:scaleX(0.9725);transform-origin:0 0;">kierunku prowadzenia</div>
<div class="a" style="left:1294.00px;top:798.00px;width:120.00px;height:34.00px;box-sizing:border-box;background:#00bcd4;border-radius:4px;"></div>
<div class="t" style="left:1305.00px;top:806.36px;font-size:18px;line-height:18px;color:#ffffff;font-weight:bold;-webkit-text-stroke:0;transform:scaleX(0.9333);transform-origin:0 0;">WSZYSTKIE</div>
<svg class="a" style="left:1594.00px;top:801.00px;" width="38.00" height="34.00" viewBox="1594.00 801.00 38.00 34.00"><path d="M1599.90 823.10 L1605.50 823.10 L1609.10 806.90 L1612.80 830.30 L1618.00 816.00 L1621.70 826.60 L1623.30 821.40 L1627.20 821.40" fill="none" stroke="#333" stroke-width="1.9" stroke-linejoin="miter"/></svg>
<div class="t" style="left:1633.00px;top:809.07px;font-size:20px;line-height:20px;color:#333333;transform:scaleX(0.8997);transform-origin:0 0;">0 - 75 %</div>
<svg class="a" style="left:1840.00px;top:800.00px;" width="36.00" height="38.00" viewBox="1840.00 800.00 36.00 38.00"><circle cx="1857.10" cy="820.60" r="11.5" fill="none" stroke="#333" stroke-width="2.3"/><path d="M1856.20 813.60 V821.90 H1862.70" fill="none" stroke="#333" stroke-width="2"/><path d="M1869.40 812.20 C1870.50 807.40 1866.70 803.60 1862.50 804.20 L1860.40 805.80 Q1864.50 808.00 1869.40 812.20 Z" fill="#333"/><path d="M1844.80 812.20 C1843.70 807.40 1847.50 803.60 1851.70 804.20 L1853.80 805.80 Q1849.70 808.00 1844.80 812.20 Z" fill="#333"/></svg>
<div class="t" style="left:1877.30px;top:809.07px;font-size:20px;line-height:20px;color:#333333;transform:scaleX(0.9913);transform-origin:0 0;">16 min</div>
<div class="a" style="left:98.00px;top:892.00px;width:3054.00px;height:110.00px;background:#fafafa;"></div>
<div class="a" style="left:98.00px;top:1002.00px;width:3054.00px;height:2.00px;background:#dadada;"></div>
<div class="a" style="left:146.00px;top:931.00px;width:32.00px;height:32.00px;box-sizing:border-box;background:#fff;border:4px solid #5f7886;border-radius:4px;"></div>
<svg class="a" style="left:250.00px;top:930.00px;" width="34.00" height="34.00" viewBox="250.00 930.00 34.00 34.00"><polygon points="267.05,934.60 270.88,942.63 279.70,943.79 273.25,949.91 274.87,958.66 267.05,954.42 259.23,958.66 260.85,949.91 254.40,943.79 263.22,942.63" fill="none" stroke="#8e8e8e" stroke-width="1.90" stroke-linejoin="miter"/></svg>
<div class="t" style="left:381.00px;top:936.07px;font-size:20px;line-height:20px;color:#333333;transform:scaleX(0.9540);transform-origin:0 0;">Gra - akcent drybling</div>
<svg class="a" style="left:900.00px;top:923.00px;" width="42.00" height="40.00" viewBox="900.00 923.00 42.00 40.00"><circle cx="920.30" cy="940.50" r="10.60" fill="none" stroke="#1e88e5" stroke-width="3.80"/><path d="M928.47 949.29 L933.40 954.60" stroke="#1e88e5" stroke-width="4.20" stroke-linecap="round"/></svg>
<svg class="a" style="left:988.00px;top:901.00px;" width="34.00" height="30.00" viewBox="988.00 901.00 34.00 30.00"><g fill="#333" transform="translate(990.90 905.80)"><path d="M0 0 H7.6 L11.2 3.8 H22.9 V7.1 H3.4 L0 17.5 Z"/><path d="M5.6 9.6 H28.1 L23.2 23 H0 Z"/></g></svg>
<div class="t" style="left:1024.40px;top:906.07px;font-size:20px;line-height:20px;color:#333333;transform:scaleX(0.9517);transform-origin:0 0;">Tydzien 1 &gt; Trening nr</div>
<div class="t" style="left:991.60px;top:935.97px;font-size:20px;line-height:20px;color:#333333;transform:scaleX(0.9595);transform-origin:0 0;">1.Prowadzenia , drybling +</div>
<div class="t" style="left:991.60px;top:965.87px;font-size:20px;line-height:20px;color:#333333;transform:scaleX(1.0158);transform-origin:0 0;">strzał</div>
<div class="a" style="left:1294.00px;top:925.00px;width:120.00px;height:34.00px;box-sizing:border-box;background:#00bcd4;border-radius:4px;"></div>
<div class="t" style="left:1305.00px;top:933.36px;font-size:18px;line-height:18px;color:#ffffff;font-weight:bold;-webkit-text-stroke:0;transform:scaleX(0.9333);transform-origin:0 0;">WSZYSTKIE</div>
<svg class="a" style="left:1594.00px;top:928.00px;" width="38.00" height="34.00" viewBox="1594.00 928.00 38.00 34.00"><path d="M1599.90 950.10 L1605.50 950.10 L1609.10 933.90 L1612.80 957.30 L1618.00 943.00 L1621.70 953.60 L1623.30 948.40 L1627.20 948.40" fill="none" stroke="#333" stroke-width="1.9" stroke-linejoin="miter"/></svg>
<div class="t" style="left:1633.00px;top:936.07px;font-size:20px;line-height:20px;color:#333333;transform:scaleX(0.9123);transform-origin:0 0;">0 - 100 %</div>
<svg class="a" style="left:1840.00px;top:927.00px;" width="36.00" height="38.00" viewBox="1840.00 927.00 36.00 38.00"><circle cx="1857.10" cy="947.60" r="11.5" fill="none" stroke="#333" stroke-width="2.3"/><path d="M1856.20 940.60 V948.90 H1862.70" fill="none" stroke="#333" stroke-width="2"/><path d="M1869.40 939.20 C1870.50 934.40 1866.70 930.60 1862.50 931.20 L1860.40 932.80 Q1864.50 935.00 1869.40 939.20 Z" fill="#333"/><path d="M1844.80 939.20 C1843.70 934.40 1847.50 930.60 1851.70 931.20 L1853.80 932.80 Q1849.70 935.00 1844.80 939.20 Z" fill="#333"/></svg>
<div class="t" style="left:1877.30px;top:936.07px;font-size:20px;line-height:20px;color:#333333;transform:scaleX(0.9913);transform-origin:0 0;">16 min</div>
<div class="a" style="left:98.00px;top:1114.00px;width:3054.00px;height:2.00px;background:#dadada;"></div>
<div class="a" style="left:146.00px;top:1043.00px;width:32.00px;height:32.00px;box-sizing:border-box;background:#fff;border:4px solid #5f7886;border-radius:4px;"></div>
<svg class="a" style="left:250.00px;top:1042.00px;" width="34.00" height="34.00" viewBox="250.00 1042.00 34.00 34.00"><polygon points="267.05,1046.60 270.88,1054.63 279.70,1055.79 273.25,1061.91 274.87,1070.66 267.05,1066.42 259.23,1070.66 260.85,1061.91 254.40,1055.79 263.22,1054.63" fill="none" stroke="#8e8e8e" stroke-width="1.90" stroke-linejoin="miter"/></svg>
<div class="t" style="left:381.00px;top:1048.07px;font-size:20px;line-height:20px;color:#333333;transform:scaleX(0.9750);transform-origin:0 0;">Drybling + strzał</div>
<svg class="a" style="left:900.00px;top:1035.00px;" width="42.00" height="40.00" viewBox="900.00 1035.00 42.00 40.00"><circle cx="920.30" cy="1052.50" r="10.60" fill="none" stroke="#1e88e5" stroke-width="3.80"/><path d="M928.47 1061.29 L933.40 1066.60" stroke="#1e88e5" stroke-width="4.20" stroke-linecap="round"/></svg>
<svg class="a" style="left:988.00px;top:1013.00px;" width="34.00" height="30.00" viewBox="988.00 1013.00 34.00 30.00"><g fill="#333" transform="translate(990.90 1017.80)"><path d="M0 0 H7.6 L11.2 3.8 H22.9 V7.1 H3.4 L0 17.5 Z"/><path d="M5.6 9.6 H28.1 L23.2 23 H0 Z"/></g></svg>
<div class="t" style="left:1024.40px;top:1018.07px;font-size:20px;line-height:20px;color:#333333;transform:scaleX(0.9517);transform-origin:0 0;">Tydzien 1 &gt; Trening nr</div>
<div class="t" style="left:991.60px;top:1047.97px;font-size:20px;line-height:20px;color:#333333;transform:scaleX(0.9595);transform-origin:0 0;">1.Prowadzenia , drybling +</div>
<div class="t" style="left:991.60px;top:1077.87px;font-size:20px;line-height:20px;color:#333333;transform:scaleX(1.0158);transform-origin:0 0;">strzał</div>
<div class="a" style="left:1294.00px;top:1037.00px;width:120.00px;height:34.00px;box-sizing:border-box;background:#00bcd4;border-radius:4px;"></div>
<div class="t" style="left:1305.00px;top:1045.36px;font-size:18px;line-height:18px;color:#ffffff;font-weight:bold;-webkit-text-stroke:0;transform:scaleX(0.9333);transform-origin:0 0;">WSZYSTKIE</div>
<svg class="a" style="left:1594.00px;top:1040.00px;" width="38.00" height="34.00" viewBox="1594.00 1040.00 38.00 34.00"><path d="M1599.90 1062.10 L1605.50 1062.10 L1609.10 1045.90 L1612.80 1069.30 L1618.00 1055.00 L1621.70 1065.60 L1623.30 1060.40 L1627.20 1060.40" fill="none" stroke="#333" stroke-width="1.9" stroke-linejoin="miter"/></svg>
<div class="t" style="left:1633.00px;top:1048.07px;font-size:20px;line-height:20px;color:#333333;transform:scaleX(0.9123);transform-origin:0 0;">70 - 70 %</div>
<svg class="a" style="left:1840.00px;top:1039.00px;" width="36.00" height="38.00" viewBox="1840.00 1039.00 36.00 38.00"><circle cx="1857.10" cy="1059.60" r="11.5" fill="none" stroke="#333" stroke-width="2.3"/><path d="M1856.20 1052.60 V1060.90 H1862.70" fill="none" stroke="#333" stroke-width="2"/><path d="M1869.40 1051.20 C1870.50 1046.40 1866.70 1042.60 1862.50 1043.20 L1860.40 1044.80 Q1864.50 1047.00 1869.40 1051.20 Z" fill="#333"/><path d="M1844.80 1051.20 C1843.70 1046.40 1847.50 1042.60 1851.70 1043.20 L1853.80 1044.80 Q1849.70 1047.00 1844.80 1051.20 Z" fill="#333"/></svg>
<div class="t" style="left:1877.30px;top:1048.07px;font-size:20px;line-height:20px;color:#333333;transform:scaleX(0.9913);transform-origin:0 0;">15 min</div>
<div class="a" style="left:98.00px;top:1116.00px;width:3054.00px;height:110.00px;background:#fafafa;"></div>
<div class="a" style="left:98.00px;top:1226.00px;width:3054.00px;height:2.00px;background:#dadada;"></div>
<div class="a" style="left:146.00px;top:1155.00px;width:32.00px;height:32.00px;box-sizing:border-box;background:#fff;border:4px solid #5f7886;border-radius:4px;"></div>
<svg class="a" style="left:250.00px;top:1154.00px;" width="34.00" height="34.00" viewBox="250.00 1154.00 34.00 34.00"><polygon points="267.05,1158.60 270.88,1166.63 279.70,1167.79 273.25,1173.91 274.87,1182.66 267.05,1178.42 259.23,1182.66 260.85,1173.91 254.40,1167.79 263.22,1166.63" fill="none" stroke="#8e8e8e" stroke-width="1.90" stroke-linejoin="miter"/></svg>
<div class="t" style="left:381.00px;top:1160.07px;font-size:20px;line-height:20px;color:#333333;transform:scaleX(0.9675);transform-origin:0 0;">Element techniczny - drybling</div>
<svg class="a" style="left:900.00px;top:1147.00px;" width="42.00" height="40.00" viewBox="900.00 1147.00 42.00 40.00"><circle cx="920.30" cy="1164.50" r="10.60" fill="none" stroke="#1e88e5" stroke-width="3.80"/><path d="M928.47 1173.29 L933.40 1178.60" stroke="#1e88e5" stroke-width="4.20" stroke-linecap="round"/></svg>
<svg class="a" style="left:988.00px;top:1125.00px;" width="34.00" height="30.00" viewBox="988.00 1125.00 34.00 30.00"><g fill="#333" transform="translate(990.90 1129.80)"><path d="M0 0 H7.6 L11.2 3.8 H22.9 V7.1 H3.4 L0 17.5 Z"/><path d="M5.6 9.6 H28.1 L23.2 23 H0 Z"/></g></svg>
<div class="t" style="left:1024.40px;top:1130.07px;font-size:20px;line-height:20px;color:#333333;transform:scaleX(0.9517);transform-origin:0 0;">Tydzien 1 &gt; Trening nr</div>
<div class="t" style="left:991.60px;top:1159.97px;font-size:20px;line-height:20px;color:#333333;transform:scaleX(0.9595);transform-origin:0 0;">1.Prowadzenia , drybling +</div>
<div class="t" style="left:991.60px;top:1189.87px;font-size:20px;line-height:20px;color:#333333;transform:scaleX(1.0158);transform-origin:0 0;">strzał</div>
<div class="a" style="left:1294.00px;top:1149.00px;width:120.00px;height:34.00px;box-sizing:border-box;background:#00bcd4;border-radius:4px;"></div>
<div class="t" style="left:1305.00px;top:1157.36px;font-size:18px;line-height:18px;color:#ffffff;font-weight:bold;-webkit-text-stroke:0;transform:scaleX(0.9333);transform-origin:0 0;">WSZYSTKIE</div>
<svg class="a" style="left:1594.00px;top:1152.00px;" width="38.00" height="34.00" viewBox="1594.00 1152.00 38.00 34.00"><path d="M1599.90 1174.10 L1605.50 1174.10 L1609.10 1157.90 L1612.80 1181.30 L1618.00 1167.00 L1621.70 1177.60 L1623.30 1172.40 L1627.20 1172.40" fill="none" stroke="#333" stroke-width="1.9" stroke-linejoin="miter"/></svg>
<div class="t" style="left:1633.00px;top:1160.07px;font-size:20px;line-height:20px;color:#333333;transform:scaleX(0.8997);transform-origin:0 0;">0 - 60 %</div>
<svg class="a" style="left:1840.00px;top:1151.00px;" width="36.00" height="38.00" viewBox="1840.00 1151.00 36.00 38.00"><circle cx="1857.10" cy="1171.60" r="11.5" fill="none" stroke="#333" stroke-width="2.3"/><path d="M1856.20 1164.60 V1172.90 H1862.70" fill="none" stroke="#333" stroke-width="2"/><path d="M1869.40 1163.20 C1870.50 1158.40 1866.70 1154.60 1862.50 1155.20 L1860.40 1156.80 Q1864.50 1159.00 1869.40 1163.20 Z" fill="#333"/><path d="M1844.80 1163.20 C1843.70 1158.40 1847.50 1154.60 1851.70 1155.20 L1853.80 1156.80 Q1849.70 1159.00 1844.80 1163.20 Z" fill="#333"/></svg>
<div class="t" style="left:1877.30px;top:1160.07px;font-size:20px;line-height:20px;color:#333333;transform:scaleX(0.9913);transform-origin:0 0;">15 min</div>
<div class="a" style="left:98.00px;top:1380.00px;width:3054.00px;height:2.00px;background:#dadada;"></div>
<div class="a" style="left:146.00px;top:1288.00px;width:32.00px;height:32.00px;box-sizing:border-box;background:#fff;border:4px solid #5f7886;border-radius:4px;"></div>
<svg class="a" style="left:250.00px;top:1287.00px;" width="34.00" height="34.00" viewBox="250.00 1287.00 34.00 34.00"><polygon points="267.05,1291.60 270.88,1299.63 279.70,1300.79 273.25,1306.91 274.87,1315.66 267.05,1311.42 259.23,1315.66 260.85,1306.91 254.40,1300.79 263.22,1299.63" fill="none" stroke="#8e8e8e" stroke-width="1.90" stroke-linejoin="miter"/></svg>
<div class="t" style="left:381.00px;top:1293.07px;font-size:20px;line-height:20px;color:#333333;transform:scaleX(0.9734);transform-origin:0 0;">Zabawa ruchowa &quot;berek samolot&quot;</div>
<svg class="a" style="left:900.00px;top:1280.00px;" width="42.00" height="40.00" viewBox="900.00 1280.00 42.00 40.00"><circle cx="920.30" cy="1297.50" r="10.60" fill="none" stroke="#1e88e5" stroke-width="3.80"/><path d="M928.47 1306.29 L933.40 1311.60" stroke="#1e88e5" stroke-width="4.20" stroke-linecap="round"/></svg>
<svg class="a" style="left:988.00px;top:1258.00px;" width="34.00" height="30.00" viewBox="988.00 1258.00 34.00 30.00"><g fill="#333" transform="translate(990.90 1262.80)"><path d="M0 0 H7.6 L11.2 3.8 H22.9 V7.1 H3.4 L0 17.5 Z"/><path d="M5.6 9.6 H28.1 L23.2 23 H0 Z"/></g></svg>
<div class="t" style="left:1024.40px;top:1263.07px;font-size:20px;line-height:20px;color:#333333;transform:scaleX(0.9517);transform-origin:0 0;">Tydzien 1 &gt; Trening nr</div>
<div class="t" style="left:991.60px;top:1292.97px;font-size:20px;line-height:20px;color:#333333;transform:scaleX(0.9595);transform-origin:0 0;">1.Prowadzenia , drybling +</div>
<div class="t" style="left:991.60px;top:1322.87px;font-size:20px;line-height:20px;color:#333333;transform:scaleX(1.0158);transform-origin:0 0;">strzał</div>
<div class="a" style="left:1294.00px;top:1282.00px;width:44.00px;height:34.00px;box-sizing:border-box;background:#00bcd4;border-radius:4px;"></div>
<div class="t" style="left:1305.00px;top:1290.36px;font-size:18px;line-height:18px;color:#ffffff;font-weight:bold;-webkit-text-stroke:0;transform:scaleX(0.9565);transform-origin:0 0;">U8</div>
<div class="a" style="left:1344.00px;top:1282.00px;width:44.00px;height:34.00px;box-sizing:border-box;background:#00bcd4;border-radius:4px;"></div>
<div class="t" style="left:1355.00px;top:1290.36px;font-size:18px;line-height:18px;color:#ffffff;font-weight:bold;-webkit-text-stroke:0;transform:scaleX(0.9565);transform-origin:0 0;">U9</div>
<svg class="a" style="left:1594.00px;top:1285.00px;" width="38.00" height="34.00" viewBox="1594.00 1285.00 38.00 34.00"><path d="M1599.90 1307.10 L1605.50 1307.10 L1609.10 1290.90 L1612.80 1314.30 L1618.00 1300.00 L1621.70 1310.60 L1623.30 1305.40 L1627.20 1305.40" fill="none" stroke="#333" stroke-width="1.9" stroke-linejoin="miter"/></svg>
<div class="t" style="left:1633.00px;top:1293.07px;font-size:20px;line-height:20px;color:#333333;transform:scaleX(0.8997);transform-origin:0 0;">0 - 80 %</div>
<svg class="a" style="left:1840.00px;top:1284.00px;" width="36.00" height="38.00" viewBox="1840.00 1284.00 36.00 38.00"><circle cx="1857.10" cy="1304.60" r="11.5" fill="none" stroke="#333" stroke-width="2.3"/><path d="M1856.20 1297.60 V1305.90 H1862.70" fill="none" stroke="#333" stroke-width="2"/><path d="M1869.40 1296.20 C1870.50 1291.40 1866.70 1287.60 1862.50 1288.20 L1860.40 1289.80 Q1864.50 1292.00 1869.40 1296.20 Z" fill="#333"/><path d="M1844.80 1296.20 C1843.70 1291.40 1847.50 1287.60 1851.70 1288.20 L1853.80 1289.80 Q1849.70 1292.00 1844.80 1296.20 Z" fill="#333"/></svg>
<div class="t" style="left:1877.30px;top:1293.07px;font-size:20px;line-height:20px;color:#333333;transform:scaleX(0.9913);transform-origin:0 0;">10 min</div>
<div class="a" style="left:2080.00px;top:1282.00px;width:110.00px;height:34.00px;box-sizing:border-box;background:#1e88e5;border-radius:4px;"></div>
<div class="t" style="left:2091.00px;top:1290.36px;font-size:18px;line-height:18px;color:#ffffff;font-weight:bold;-webkit-text-stroke:0;transform:scaleX(0.9263);transform-origin:0 0;">GRUPOWY</div>
<div class="a" style="left:2446.00px;top:1282.00px;width:142.00px;height:34.00px;box-sizing:border-box;background:#43a047;border-radius:4px;"></div>
<div class="t" style="left:2457.00px;top:1290.36px;font-size:18px;line-height:18px;color:#ffffff;font-weight:bold;-webkit-text-stroke:0;transform:scaleX(0.9160);transform-origin:0 0;">ROZGRZEWKA</div>
<div class="a" style="left:2812.00px;top:1238.00px;width:108.00px;height:34.00px;box-sizing:border-box;background:#00acc1;border-radius:4px;"></div>
<div class="t" style="left:2823.00px;top:1246.36px;font-size:18px;line-height:18px;color:#ffffff;font-weight:bold;-webkit-text-stroke:0;transform:scaleX(0.9223);transform-origin:0 0;">DRYBLING</div>
<div class="a" style="left:2812.00px;top:1282.00px;width:208.00px;height:34.00px;box-sizing:border-box;background:#0097a7;border-radius:4px;"></div>
<div class="t" style="left:2823.00px;top:1290.36px;font-size:18px;line-height:18px;color:#ffffff;font-weight:bold;-webkit-text-stroke:0;transform:scaleX(0.9442);transform-origin:0 0;">STRZAŁY NA BRAMKĘ</div>
<div class="a" style="left:2812.00px;top:1326.00px;width:196.00px;height:34.00px;box-sizing:border-box;background:#00acc1;border-radius:4px;"></div>
<div class="t" style="left:2823.00px;top:1334.36px;font-size:18px;line-height:18px;color:#ffffff;font-weight:bold;-webkit-text-stroke:0;transform:scaleX(0.9405);transform-origin:0 0;">PROWADZENIE PIŁKI</div>
<div class="a" style="left:98.00px;top:1382.00px;width:3054.00px;height:110.00px;background:#fafafa;"></div>
<div class="a" style="left:98.00px;top:1492.00px;width:3054.00px;height:2.00px;background:#dadada;"></div>
<div class="a" style="left:146.00px;top:1421.00px;width:32.00px;height:32.00px;box-sizing:border-box;background:#fff;border:4px solid #5f7886;border-radius:4px;"></div>
<svg class="a" style="left:250.00px;top:1420.00px;" width="34.00" height="34.00" viewBox="250.00 1420.00 34.00 34.00"><polygon points="267.05,1424.60 270.88,1432.63 279.70,1433.79 273.25,1439.91 274.87,1448.66 267.05,1444.42 259.23,1448.66 260.85,1439.91 254.40,1433.79 263.22,1432.63" fill="none" stroke="#8e8e8e" stroke-width="1.90" stroke-linejoin="miter"/></svg>
<div class="t" style="left:381.00px;top:1426.07px;font-size:20px;line-height:20px;color:#333333;transform:scaleX(0.9503);transform-origin:0 0;">Cz.K Ćwiczenie A</div>
<svg class="a" style="left:900.00px;top:1413.00px;" width="42.00" height="40.00" viewBox="900.00 1413.00 42.00 40.00"><circle cx="920.30" cy="1430.50" r="10.60" fill="none" stroke="#1e88e5" stroke-width="3.80"/><path d="M928.47 1439.29 L933.40 1444.60" stroke="#1e88e5" stroke-width="4.20" stroke-linecap="round"/></svg>
<svg class="a" style="left:988.00px;top:1391.00px;" width="34.00" height="30.00" viewBox="988.00 1391.00 34.00 30.00"><g fill="#333" transform="translate(990.90 1395.80)"><path d="M0 0 H7.6 L11.2 3.8 H22.9 V7.1 H3.4 L0 17.5 Z"/><path d="M5.6 9.6 H28.1 L23.2 23 H0 Z"/></g></svg>
<div class="t" style="left:1024.40px;top:1396.07px;font-size:20px;line-height:20px;color:#333333;transform:scaleX(0.9503);transform-origin:0 0;">Tydzien 1 &gt; Trening 2.</div>
<div class="t" style="left:991.60px;top:1425.97px;font-size:20px;line-height:20px;color:#333333;transform:scaleX(0.9530);transform-origin:0 0;">Działania Grupowe - gra po</div>
<div class="t" style="left:991.60px;top:1455.87px;font-size:20px;line-height:20px;color:#333333;">trójkącie</div>
<div class="a" style="left:1294.00px;top:1415.00px;width:120.00px;height:34.00px;box-sizing:border-box;background:#00bcd4;border-radius:4px;"></div>
<div class="t" style="left:1305.00px;top:1423.36px;font-size:18px;line-height:18px;color:#ffffff;font-weight:bold;-webkit-text-stroke:0;transform:scaleX(0.9333);transform-origin:0 0;">WSZYSTKIE</div>
<svg class="a" style="left:1594.00px;top:1418.00px;" width="38.00" height="34.00" viewBox="1594.00 1418.00 38.00 34.00"><path d="M1599.90 1440.10 L1605.50 1440.10 L1609.10 1423.90 L1612.80 1447.30 L1618.00 1433.00 L1621.70 1443.60 L1623.30 1438.40 L1627.20 1438.40" fill="none" stroke="#333" stroke-width="1.9" stroke-linejoin="miter"/></svg>
<div class="t" style="left:1633.00px;top:1426.07px;font-size:20px;line-height:20px;color:#333333;transform:scaleX(0.8690);transform-origin:0 0;">0 %</div>
<svg class="a" style="left:1840.00px;top:1417.00px;" width="36.00" height="38.00" viewBox="1840.00 1417.00 36.00 38.00"><circle cx="1857.10" cy="1437.60" r="11.5" fill="none" stroke="#333" stroke-width="2.3"/><path d="M1856.20 1430.60 V1438.90 H1862.70" fill="none" stroke="#333" stroke-width="2"/><path d="M1869.40 1429.20 C1870.50 1424.40 1866.70 1420.60 1862.50 1421.20 L1860.40 1422.80 Q1864.50 1425.00 1869.40 1429.20 Z" fill="#333"/><path d="M1844.80 1429.20 C1843.70 1424.40 1847.50 1420.60 1851.70 1421.20 L1853.80 1422.80 Q1849.70 1425.00 1844.80 1429.20 Z" fill="#333"/></svg>
<div class="t" style="left:1877.30px;top:1426.07px;font-size:20px;line-height:20px;color:#333333;transform:scaleX(0.9913);transform-origin:0 0;">10 min</div>
<div class="a" style="left:98.00px;top:1604.00px;width:3054.00px;height:2.00px;background:#b5b5b5;"></div>
<div class="a" style="left:146.00px;top:1533.00px;width:32.00px;height:32.00px;box-sizing:border-box;background:#fff;border:4px solid #5f7886;border-radius:4px;"></div>
<svg class="a" style="left:250.00px;top:1532.00px;" width="34.00" height="34.00" viewBox="250.00 1532.00 34.00 34.00"><polygon points="267.05,1536.60 270.88,1544.63 279.70,1545.79 273.25,1551.91 274.87,1560.66 267.05,1556.42 259.23,1560.66 260.85,1551.91 254.40,1545.79 263.22,1544.63" fill="none" stroke="#8e8e8e" stroke-width="1.90" stroke-linejoin="miter"/></svg>
<div class="t" style="left:381.00px;top:1538.07px;font-size:20px;line-height:20px;color:#333333;transform:scaleX(0.9342);transform-origin:0 0;">Cz.G Ćwiczenie B</div>
<svg class="a" style="left:900.00px;top:1525.00px;" width="42.00" height="40.00" viewBox="900.00 1525.00 42.00 40.00"><circle cx="920.30" cy="1542.50" r="10.60" fill="none" stroke="#1e88e5" stroke-width="3.80"/><path d="M928.47 1551.29 L933.40 1556.60" stroke="#1e88e5" stroke-width="4.20" stroke-linecap="round"/></svg>
<svg class="a" style="left:988.00px;top:1503.00px;" width="34.00" height="30.00" viewBox="988.00 1503.00 34.00 30.00"><g fill="#333" transform="translate(990.90 1507.80)"><path d="M0 0 H7.6 L11.2 3.8 H22.9 V7.1 H3.4 L0 17.5 Z"/><path d="M5.6 9.6 H28.1 L23.2 23 H0 Z"/></g></svg>
<div class="t" style="left:1024.40px;top:1508.07px;font-size:20px;line-height:20px;color:#333333;transform:scaleX(0.9503);transform-origin:0 0;">Tydzien 1 &gt; Trening 2.</div>
<div class="t" style="left:991.60px;top:1537.97px;font-size:20px;line-height:20px;color:#333333;transform:scaleX(0.9530);transform-origin:0 0;">Działania Grupowe - gra po</div>
<div class="t" style="left:991.60px;top:1567.87px;font-size:20px;line-height:20px;color:#333333;">trójkącie</div>
<div class="a" style="left:1294.00px;top:1527.00px;width:120.00px;height:34.00px;box-sizing:border-box;background:#00bcd4;border-radius:4px;"></div>
<div class="t" style="left:1305.00px;top:1535.36px;font-size:18px;line-height:18px;color:#ffffff;font-weight:bold;-webkit-text-stroke:0;transform:scaleX(0.9333);transform-origin:0 0;">WSZYSTKIE</div>
<svg class="a" style="left:1594.00px;top:1530.00px;" width="38.00" height="34.00" viewBox="1594.00 1530.00 38.00 34.00"><path d="M1599.90 1552.10 L1605.50 1552.10 L1609.10 1535.90 L1612.80 1559.30 L1618.00 1545.00 L1621.70 1555.60 L1623.30 1550.40 L1627.20 1550.40" fill="none" stroke="#333" stroke-width="1.9" stroke-linejoin="miter"/></svg>
<div class="t" style="left:1633.00px;top:1538.07px;font-size:20px;line-height:20px;color:#333333;transform:scaleX(0.8690);transform-origin:0 0;">0 %</div>
<svg class="a" style="left:1840.00px;top:1529.00px;" width="36.00" height="38.00" viewBox="1840.00 1529.00 36.00 38.00"><circle cx="1857.10" cy="1549.60" r="11.5" fill="none" stroke="#333" stroke-width="2.3"/><path d="M1856.20 1542.60 V1550.90 H1862.70" fill="none" stroke="#333" stroke-width="2"/><path d="M1869.40 1541.20 C1870.50 1536.40 1866.70 1532.60 1862.50 1533.20 L1860.40 1534.80 Q1864.50 1537.00 1869.40 1541.20 Z" fill="#333"/><path d="M1844.80 1541.20 C1843.70 1536.40 1847.50 1532.60 1851.70 1533.20 L1853.80 1534.80 Q1849.70 1537.00 1844.80 1541.20 Z" fill="#333"/></svg>
<div class="t" style="left:1877.30px;top:1538.07px;font-size:20px;line-height:20px;color:#333333;transform:scaleX(0.9913);transform-origin:0 0;">10 min</div>
<div class="a" style="left:90.00px;top:4.00px;width:3066.00px;height:100.00px;box-sizing:border-box;border:10px solid #ff2200;z-index:50;"></div>
<div class="a" style="left:102.00px;top:122.00px;width:3051.00px;height:115.00px;box-sizing:border-box;border:10px solid #0055d4;z-index:50;"></div>
<div class="a" style="left:100.00px;top:395.00px;width:121.00px;height:1211.00px;box-sizing:border-box;border:10px solid #00ff00;z-index:50;"></div>
</body></html>
